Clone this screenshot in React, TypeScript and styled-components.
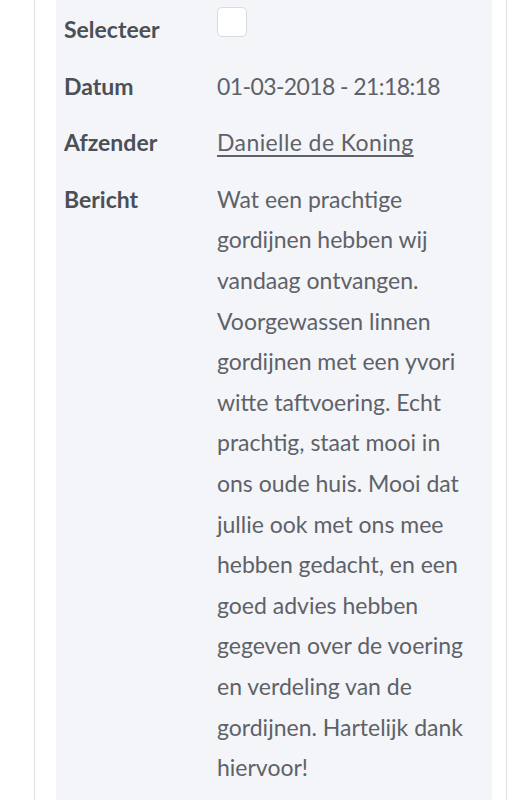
import styled, { createGlobalStyle } from "styled-components";

const GlobalStyle = createGlobalStyle`
  html, body {
    margin: 0;
    padding: 0;
    background: #ffffff;
  }
  body {
    font-family: Lato, "Open Sans", sans-serif;
  }
  * {
    box-sizing: border-box;
  }
`;

const Page = styled.div`
  display: flex;
  padding-left: 34px;
  height: 800px;
  overflow: hidden;
`;

const Card = styled.div`
  width: 473px;
  flex: none;
  border-left: 1px solid #dfe0e5;
  border-right: 1px solid #dfe0e5;
  padding: 0 14px 0 21px;
  height: 100%;
  background: #ffffff;
`;

const Panel = styled.div`
  background: #f4f5f9;
  height: 100%;
  padding-top: 1px;
`;

const Row = styled.div`
  display: grid;
  grid-template-columns: 153px 1fr;
  padding: 8px 20px 8px 8px;
  line-height: 40.6px;
  font-size: 23px;
`;

const Label = styled.div`
  font-weight: 700;
  color: #4b4f56;
`;

const Value = styled.div<{ $tight?: boolean }>`
  color: #5e6268;
  letter-spacing: ${(p) => (p.$tight ? "-0.6px" : "0")};
`;

const NameLink = styled.a`
  color: #5e6268;
  text-decoration: underline;
  text-underline-offset: 4px;
  text-decoration-thickness: 1.5px;
  letter-spacing: 0.4px;
`;

const Checkbox = styled.span`
  display: block;
  width: 30px;
  height: 30px;
  border: 1.5px solid #d9dadf;
  border-radius: 5px;
  background: #ffffff;
  margin-top: -2px;
`;

export default function App() {
  return (
    <>
      <GlobalStyle />
      <Page>
        <Card>
          <Panel>
            <Row>
              <Label>Selecteer</Label>
              <Value>
                <Checkbox />
              </Value>
            </Row>
            <Row>
              <Label>Datum</Label>
              <Value $tight>01-03-2018 - 21:18:18</Value>
            </Row>
            <Row>
              <Label>Afzender</Label>
              <Value>
                <NameLink href="#">Danielle de Koning</NameLink>
              </Value>
            </Row>
            <Row>
              <Label>Bericht</Label>
              <Value>
                Wat een prachtige gordijnen hebben wij vandaag ontvangen.
                Voorgewassen linnen gordijnen met een yvori witte taftvoering.
                Echt prachtig, staat mooi in ons oude huis. Mooi dat jullie ook
                met ons mee hebben gedacht, en een goed advies hebben gegeven
                over de voering en verdeling van de gordijnen. Hartelijk dank
                hiervoor!
              </Value>
            </Row>
          </Panel>
        </Card>
      </Page>
    </>
  );
}
